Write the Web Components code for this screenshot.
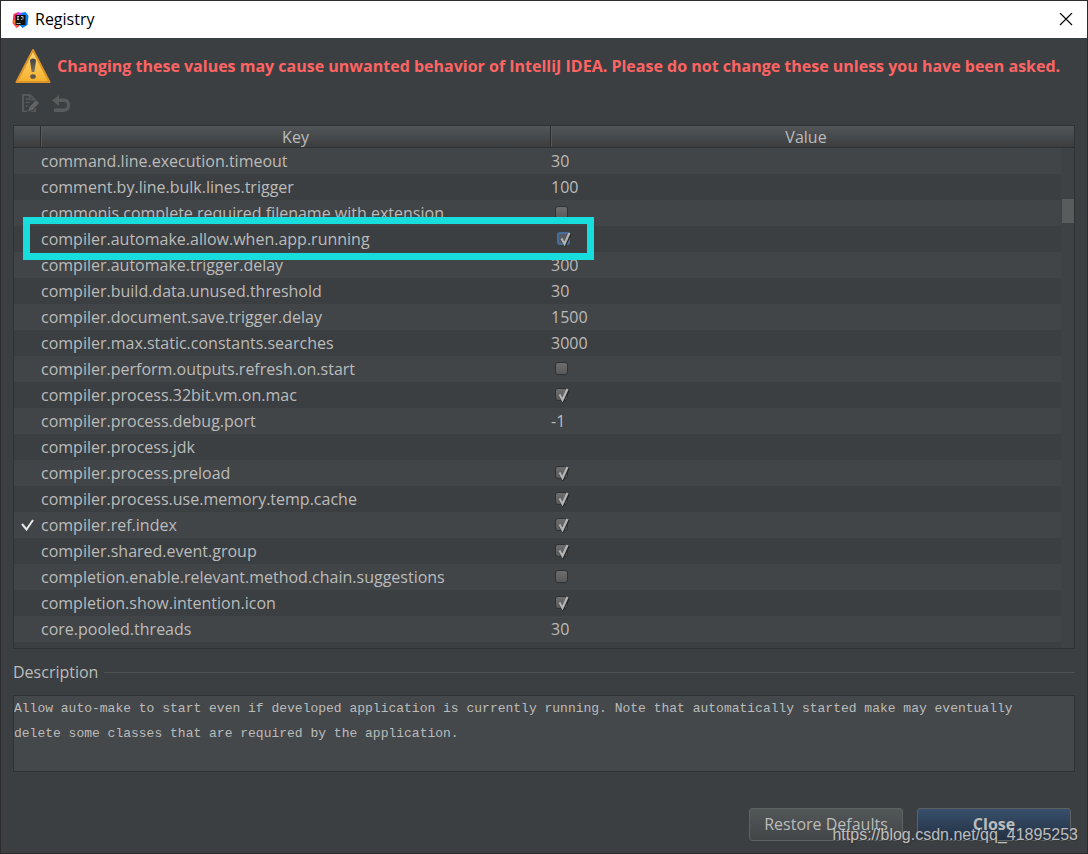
<!DOCTYPE html>
<html lang="en">
<head>
<meta charset="utf-8">
<title>Registry</title>
<style>
  body { margin: 0; background: #2b2b2b; color: #bbbbbb; font: 16px/26px "Open Sans", "Noto Sans", sans-serif; }
</style>
</head>
<body>
<registry-dialog>
  <title-bar slot="title">Registry</title-bar>
  <warning-banner>Changing these values may cause unwanted behavior of IntelliJ IDEA. Please do not change these unless you have been asked.</warning-banner>
  <registry-toolbar></registry-toolbar>
  <registry-table></registry-table>
  <description-box label="Description"></description-box>
  <dialog-actions>
    <dialog-button>Restore Defaults</dialog-button>
    <dialog-button primary>Close</dialog-button>
  </dialog-actions>
  <site-mark slot="mark">https://blog.csdn.net/qq_41895253</site-mark>
</registry-dialog>

<script>
  const define = (name, html, setup) => customElements.define(name, class extends HTMLElement {
    connectedCallback() {
      if (this.shadowRoot) return;
      this.attachShadow({ mode: "open" }).innerHTML = html;
      if (setup) setup(this, this.shadowRoot);
    }
  });

  define("registry-dialog", `
    <style>
      :host { display: flex; flex-direction: column; position: relative; box-sizing: border-box; min-height: 100vh; border: 1px solid #2b2b2e; background: #3c3f41; }
      main { flex: 1; display: flex; flex-direction: column; padding: 10px 12px 12px; }
    </style>
    <slot name="title"></slot>
    <main><slot></slot></main>
    <slot name="mark"></slot>`);

  define("title-bar", `
    <style>
      :host { display: flex; align-items: center; gap: 6px; height: 37px; padding: 0 14px 0 11px; background: #fff; color: #000; }
      h1 { margin: 0; flex: 1; padding-bottom: 2px; font-size: 16px; font-weight: 400; }
      button { border: 0; padding: 0; background: none; width: 14px; height: 14px; display: flex; }
    </style>
    <svg width="17" height="16" viewBox="0 0 16 16" aria-hidden="true">
      <path d="M1 2 6 0 9 5 7 14 4 16 0 11Z" fill="#fe315d"/>
      <path d="M0 9 4 7 6 13 4 15Z" fill="#f97a12"/>
      <path d="M8 1 13 0 16 4 15 13 10 16 6 12Z" fill="#087cfa"/>
      <path d="M5 0 9 1 8 4H4Z" fill="#b74af7"/>
      <rect x="3" y="3" width="10" height="10" fill="#111"/>
      <path d="M4.500 4.500h2M5.500 4.500v3M4.500 7.500h2M8.500 4.500h2v2q0 1-2 1M4 11.500h4" stroke="#bbb" fill="none"/>
    </svg>
    <h1><slot></slot></h1>
    <button type="button" aria-label="Close window">
      <svg width="14" height="14" viewBox="0 0 14 14"><path d="M1 0 13 12M13 0 1 12" stroke="#000" stroke-width="1.200"/></svg>
    </button>`);

  define("warning-banner", `
    <style>
      :host { display: flex; align-items: center; gap: 6px; margin-left: 2px; height: 36px; color: #ff6464; font-weight: 700; white-space: nowrap; }
      svg { flex: none; }
    </style>
    <svg width="36" height="36" viewBox="0 0 36 36" aria-hidden="true">
      <defs>
        <linearGradient id="w" x2="0" y2="1"><stop stop-color="#ffd978"/><stop offset="1" stop-color="#f5b02c"/></linearGradient>
        <linearGradient id="m" x2="0" y2="1"><stop stop-color="#444"/><stop offset="1" stop-color="#77705f"/></linearGradient>
      </defs>
      <path d="M18 2 34.500 34H1.500Z" fill="url(#w)" stroke="#da9427" stroke-width="2" stroke-linejoin="round"/>
      <path d="M15 13q0-2.500 3-2.500T21 13L19.300 24h-2.600Z" fill="url(#m)"/>
      <ellipse cx="18" cy="28.500" rx="2.800" ry="2.300" fill="#5d564b"/>
    </svg>
    <span><slot></slot></span>`);

  define("registry-toolbar", `
    <style>
      :host { display: flex; gap: 12px; padding: 10px 8px 13px; }
      button { border: 0; padding: 0; background: none; display: flex; width: 19px; height: 18px; }
    </style>
    <button type="button" disabled aria-label="Edit value">
      <svg width="19" height="18" viewBox="0 0 19 18" fill="none">
        <path d="M14 14v3.500H2V1h7l4.500 4.500v2" stroke="#565859" stroke-width="2"/>
        <path d="M8.500 1v4.500h4M4.500 5h3M4.500 8.500h4M4.500 12h2" stroke="#565859" stroke-width="1.500"/>
        <path d="M6.500 18 8 13 15 5.500 18.500 9 11.500 16.500Z" fill="#626465" stroke="#3c3f41"/>
      </svg>
    </button>
    <button type="button" disabled aria-label="Revert">
      <svg width="19" height="18" viewBox="0 0 19 18"><path d="M0 6.500 7 1V4.500H12Q18 5 18 11T12 18H2V14.500H12Q15 14 15 11T12 8H7V12Z" fill="#595b5c"/></svg>
    </button>`);

  const entries = [
    ["command.line.execution.timeout", "30"],
    ["comment.by.line.bulk.lines.trigger", "100"],
    ["commonjs.complete.required.filename.with.extension", false],
    ["compiler.automake.allow.when.app.running", true, "marked"],
    ["compiler.automake.trigger.delay", "300"],
    ["compiler.build.data.unused.threshold", "30"],
    ["compiler.document.save.trigger.delay", "1500"],
    ["compiler.max.static.constants.searches", "3000"],
    ["compiler.perform.outputs.refresh.on.start", false],
    ["compiler.process.32bit.vm.on.mac", true],
    ["compiler.process.debug.port", "-1"],
    ["compiler.process.jdk", ""],
    ["compiler.process.preload", true],
    ["compiler.process.use.memory.temp.cache", true],
    ["compiler.ref.index", true, "changed"],
    ["compiler.shared.event.group", true],
    ["completion.enable.relevant.method.chain.suggestions", false],
    ["completion.show.intention.icon", true],
    ["core.pooled.threads", "30"]
  ];

  define("registry-table", `
    <style>
      :host { flex: 1; display: block; position: relative; border: 1px solid #2f3133; }
      table { width: 100%; table-layout: fixed; border-collapse: separate; border-spacing: 0; }
      .state { width: 27px; } .key { width: 510px; }
      th { height: 22px; line-height: 20px; padding: 1px 0 0; box-sizing: border-box; font-weight: 400; border-bottom: 1px solid #2f3133; background: linear-gradient(#525658, #3b3d3f); }
      th:not(:last-child) { border-right: 1px solid #2a2c2d; }
      th + th { box-shadow: inset 1px 0 #56595b; }
      th:last-child { padding-right: 13px; }
      td { height: 26px; padding: 0; white-space: nowrap; }
      tbody tr:nth-child(odd) { background: #414547; }
      td svg { display: block; margin-left: 7px; }
      .marked td:nth-child(2) { position: relative; }
      .marked td:nth-child(2)::after { content: ""; position: absolute; inset: -9px -43px -8px -18px; border: 7px solid #18dddd; pointer-events: none; }
      .track { position: absolute; inset: 22px 0 0 auto; width: 13px; background: #3f4244; }
      .thumb { margin: 51px 0 0 1px; height: 24px; background: #595c5d; }
    </style>
    <table>
      <colgroup><col class="state"><col class="key"><col></colgroup>
      <thead><tr><th></th><th scope="col">Key</th><th scope="col">Value</th></tr></thead>
      <tbody></tbody>
    </table>
    <div class="track"><div class="thumb"></div></div>`,
    (host, root) => {
      const check = `<svg width="13" height="12" viewBox="0 0 13 12"><path d="M1 5 5.500 10.500 12 1" fill="none" stroke="#e8e8e8" stroke-width="2"/></svg>`;
      root.querySelector("tbody").innerHTML = entries.map(([key, value, state]) => `
        <tr class="${state || ""}"><td>${state === "changed" ? check : ""}</td><td>${key}</td><td>${
          typeof value === "string" ? value : `<value-check label="${key}"${value ? " checked" : ""}${state === "marked" ? " focused" : ""}></value-check>`
        }</td></tr>`).join("");
    });

  define("value-check", `
    <style>
      :host { display: flex; padding: 0 0 1px 4px; }
      :host([focused]) { padding-left: 6px; }
      label { position: relative; display: flex; }
      input { appearance: none; box-sizing: border-box; margin: 0; width: 13px; height: 13px; border: 1px solid #2f3234; border-radius: 3px; background: linear-gradient(#6e6e6e, #595959); }
      :host([focused]) input { border: 2px solid #466d9c; background: #565a60; }
      svg { display: none; position: absolute; left: 3px; top: 0; }
      :host([checked]) svg { display: block; }
    </style>
    <label><input type="checkbox">
      <svg width="12" height="15" viewBox="0 0 12 15" fill="none">
        <path d="M2 7.500 5 13.500 10.500 2" stroke="#242628" stroke-width="2.400"/>
        <path d="M1.500 6.500 4.500 12 9.500 1" stroke="#b4b4b4" stroke-width="2.200"/>
      </svg>
    </label>`,
    (host, root) => {
      const input = root.querySelector("input");
      input.setAttribute("aria-label", host.getAttribute("label"));
      input.checked = host.hasAttribute("checked");
      input.addEventListener("change", () => host.toggleAttribute("checked", input.checked));
    });

  define("description-box", `
    <style>
      :host { display: block; }
      label { display: flex; align-items: center; gap: 6px; height: 46px; }
      label::after { content: ""; flex: 1; height: 1px; background: #4f5254; }
      textarea { display: block; box-sizing: border-box; width: 100%; height: 77px; padding: 0 16px 0 0; border: 1px solid #2f3133; border-radius: 0; outline: 0; resize: none; overflow: hidden; background: #45484a; color: #bbbbbb; font: 13px/25px "Liberation Mono", monospace; }
    </style>
    <label for="text"></label>
    <textarea id="text" readonly>Allow auto-make to start even if developed application is currently running. Note that automatically started make may eventually delete some classes that are required by the application.</textarea>`,
    (host, root) => { root.querySelector("label").textContent = host.getAttribute("label"); });

  define("dialog-actions", `
    <style>:host { display: flex; justify-content: flex-end; gap: 14px; padding: 36px 4px 0 0; }</style>
    <slot></slot>`);

  define("dialog-button", `
    <style>
      :host { display: block; }
      button { box-sizing: border-box; min-width: 154px; height: 33px; padding: 0 12px 2px; border: 1px solid #5e6162; border-radius: 3px; background: linear-gradient(#525758, #424648); color: #bbbbbb; font: inherit; white-space: nowrap; }
      :host([primary]) button { background: linear-gradient(#384f6b, #233143); font-weight: 700; }
    </style>
    <button type="button"><slot></slot></button>`);

  define("site-mark", `
    <style>:host { position: absolute; right: 9px; bottom: 8px; font: 16px/20px "Liberation Sans", sans-serif; color: rgba(225, 225, 225, .8); text-shadow: 1px 1px 1px #333; pointer-events: none; }</style>
    <slot></slot>`);
</script>
</body>
</html>
